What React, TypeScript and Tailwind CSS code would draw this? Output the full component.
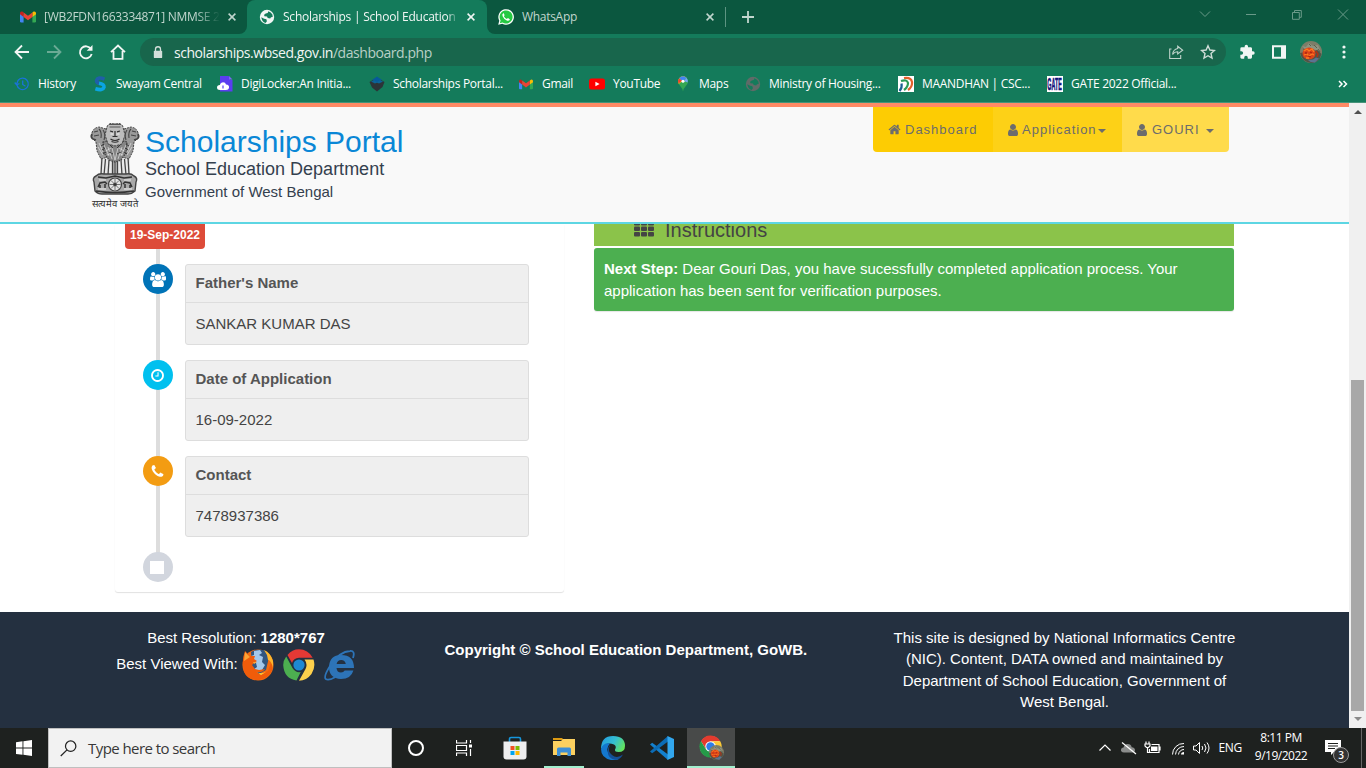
import React from "react";

type P = { className?: string };

const seg = "font-['Open_Sans','Noto_Sans',sans-serif]";

/* ---------- shared glyphs ---------- */
const Gmail = ({ className }: P) => (
  <svg viewBox="0 0 16 12" className={className}>
    <path d="M0 2l3.600 2v7.500H1.200Q0 11.500 0 10.300z" fill="#4285f4" />
    <path d="M12.400 4L16 2v8.300q0 1.200-1.200 1.200h-2.400z" fill="#34a853" />
    <path d="M12.400 1.400l1.200-.9Q16 0 16 2.300v1l-3.600 2.700z" fill="#fbbc04" />
    <path d="M3.600 1.400L2.400.5Q0 0 0 2.300v1L3.600 6z" fill="#c5221f" />
    <path d="M3.600 1.400L8 4.700l4.400-3.300V6L8 9.300 3.600 6z" fill="#ea4335" />
  </svg>
);

const Globe = ({ className }: P) => (
  <svg viewBox="0 0 16 16" className={className}>
    <circle cx="8" cy="8" r="7.200" fill="currentColor" />
    <path
      d="M9.300 2.300Q12 3 13.400 5.600L13.700 8l-1.700.2-.8 1.300-2.500-.5-.7-1.500-2.600-.2-.3-1.500 1.600-1.400 2-.3zM2.300 8.200l2.800 1.500 2.300.6.5 2-1.300 1.700Q2.800 12.900 2.300 8.200z"
      fill="var(--gap)"
    />
  </svg>
);

const Cross = ({ className }: P) => (
  <svg viewBox="0 0 8 8" className={className}>
    <path d="M.6.6l6.800 6.800M7.400.6L.6 7.400" stroke="currentColor" strokeWidth="1.500" />
  </svg>
);

const ChromeLogo = ({ className }: P) => (
  <svg viewBox="0 0 48 48" className={className}>
    <circle cx="24" cy="24" r="22" fill="#fff" />
    <path d="M24 13h20.400A23 23 0 0 0 4 12.600L14.400 29.500A11 11 0 0 1 24 13z" fill="#e33b2e" />
    <path d="M14.400 29.500L4 12.600A23 23 0 0 0 23.500 47L33.600 29.500a11 11 0 0 1-19.200 0z" fill="#259a48" />
    <path d="M24 13h20.400A23 23 0 0 1 23.500 47L33.600 29.500A11 11 0 0 0 24 13z" fill="#fcc934" />
    <circle cx="24" cy="24" r="8.800" fill="#2f7de9" />
  </svg>
);

const Photo = ({ className }: P) => (
  <svg viewBox="0 0 22 22" className={className}>
    <circle cx="11" cy="11" r="11" fill="#7d7d68" />
    <path d="M2 5l4 1 3-4 4 3 5-1 2 5-4 2-5-3-4 2z" fill="#8f9480" />
    <path d="M0 12q2 9 11 10 6 0 9-5l1.500-4-4-4z" fill="#515546" />
    <path d="M3 8l3 1M14 4l3 3M18 8l2 3M9 3l2 2" stroke="#5c5f4d" />
    <ellipse cx="9" cy="12.500" rx="6.500" ry="6" fill="#dc431a" />
    <path d="M4 10l3-2 2 2 3-2 2 3M4 14l3-1 2 2 3-2 2 1M6 17l3 0" stroke="#ff7a1e" strokeWidth="1.300" fill="none" />
    <path d="M5 12l2 0M10 11l2 1M8 15l3 1" stroke="#a92412" strokeWidth="1.300" />
    <path d="M16 10l2 3-1 3" stroke="#b03218" strokeWidth="1.500" fill="none" />
    <path d="M8 19l5-.5 3-2 3 1-4 4q-5 0-7-2.500z" fill="#5c7392" />
  </svg>
);

/* ---------- browser ---------- */
const TabStrip = () => (
  <div className="flex h-[34px] shrink-0 bg-[#147b5b]">
    <div className="flex w-[247px] items-center rounded-br-lg bg-[#0b573f] pl-5 text-[#c1d6ce]">
      <Gmail className="h-3 w-4" />
      <span className="ml-2 w-[176px] overflow-hidden text-[12px] tracking-[-0.29px] whitespace-nowrap [mask-image:linear-gradient(to_right,black_86%,transparent)]">
        [WB2FDN1663334871] NMMSE 2
      </span>
      <Cross className="ml-2 size-2" />
    </div>
    <div className="w-60 bg-[#0b573f]">
      <div className="flex h-full items-center rounded-t-lg bg-[#147b5b] pl-3 text-[#f1f6f4] [--gap:#147b5b]">
        <Globe className="size-4" />
        <span className="ml-[8px] w-[176px] overflow-hidden text-[12px] tracking-[-0.22px] whitespace-nowrap [mask-image:linear-gradient(to_right,black_93%,transparent)]">
          Scholarships | School Education D
        </span>
        <Cross className="ml-2 size-2" />
      </div>
    </div>
    <div className="flex flex-1 items-center rounded-bl-lg bg-[#0b573f] pl-[11px] text-[#c1d6ce]">
      <svg viewBox="0 0 16 16" className="size-4">
        <path d="M.2 15.800L1.300 11.800A7.800 7.800 0 1 1 4.300 14.800z" fill="#fff" />
        <path d="M1.800 14.200l.8-2.800A6.500 6.500 0 1 1 4.600 13.400z" fill="#25c943" />
        <path d="M5.300 4.200q-1.600 1.200-.7 3.100 1.200 3.200 4.600 4.500 2.200.4 2.700-1.600l-2-1.100-1 1q-2-.8-3-2.800l.7-1-.8-2.100z" fill="#fff" />
      </svg>
      <span className="ml-2 w-[184px] text-[12px] tracking-[-0.3px]">WhatsApp</span>
      <Cross className="size-2" />
      <div className="ml-[11px] h-5 w-px bg-[#5d9482]" />
      <svg viewBox="0 0 12 12" className="ml-4 size-3">
        <path d="M6 0v12M0 6h12" stroke="currentColor" strokeWidth="1.800" />
      </svg>
      <div className="flex-1" />
      <svg viewBox="0 0 166 28" className="mr-2 h-7 w-[166px] text-[#6a9a89]" fill="none" stroke="currentColor">
        <path d="M8 8.500l5 5 5-5M54 11.500h10M100.500 9.500h6.800v6.800h-6.800zM102.500 9.500v-2h6.800v6.800h-2M146 6.500l10 10M156 6.500l-10 10" />
      </svg>
    </div>
  </div>
);

const Toolbar = () => (
  <div className="flex h-9 shrink-0 items-center bg-[#147b5b] pl-3.5 text-[#f1f6f4]">
    <svg viewBox="0 0 112 16" className="h-4 w-28" fill="none" stroke="currentColor" strokeWidth="1.800">
      <path d="M15 8H2M8 1.500L1.500 8 8 14.500" />
      <path d="M33 8h13M40 1.500L46.500 8 40 14.500" stroke="#6baa95" />
      <path d="M77 5a6 6 0 1 0 .7 5" />
      <path d="M78.500 1v5.800h-5.800z" fill="currentColor" stroke="none" />
      <path d="M97 8.200L104 1.500l7 6.700M99.500 7v7.800h9V7" />
    </svg>
    <div className="ml-[14px] flex h-7 w-[1086px] items-center rounded-full bg-[#18664c] pl-[13px]">
      <svg viewBox="0 0 10 14" className="h-[13px] w-[10px]">
        <path d="M2.300 6V3.500a2.700 2.700 0 0 1 5.400 0V6" fill="none" stroke="#d3dfda" strokeWidth="1.400" />
        <rect x=".5" y="5" width="9" height="8" rx="1" fill="#d3dfda" />
      </svg>
      <span className="ml-[11px] flex-1 text-[14px] tracking-[-0.45px]">
        scholarships.wbsed.gov.in<span className="text-[#b9d0c7]">/dashboard.php</span>
      </span>
      <svg viewBox="0 0 16 16" className="size-4" fill="none" stroke="#bed3ca" strokeWidth="1.100">
        <path d="M3.500 5H1.700v9.500h11V11" />
        <path d="M9.700 2.200l5 4-5 3.800V7.800Q6.500 7.600 4.600 10.500 5 5.500 9.700 4.500z" />
      </svg>
      <svg viewBox="0 0 16 16" className="mr-[10px] ml-4 size-4" fill="none" stroke="#cfddd7" strokeWidth="1.400">
        <path d="M8 1.800l1.900 4.200 4.500.5-3.400 3 1 4.500L8 11.700 4 14l1-4.500-3.400-3 4.500-.5z" />
      </svg>
    </div>
    <svg viewBox="0 0 24 24" className="ml-[13px] size-4" fill="currentColor">
      <path d="M21 11h-1.500V7c0-1.100-.9-2-2-2h-4V3.500a2.500 2.500 0 0 0-5 0V5H4a2 2 0 0 0-2 2v3.800h1.500a2.700 2.700 0 0 1 0 5.400H2V20c0 1.100.9 2 2 2h3.800v-1.500a2.700 2.700 0 0 1 5.400 0V22h4.300a2 2 0 0 0 2-2v-4H21a2.500 2.500 0 0 0 0-5z" />
    </svg>
    <svg viewBox="0 0 14 14" className="ml-[17px] size-3.5">
      <path d="M0 .2h14v13.600H0zM2 2.200v9.600h7V2.200z" fill="currentColor" fillRule="evenodd" />
    </svg>
    <Photo className="ml-[14px] size-[22px]" />
    <svg viewBox="0 0 4 14" className="ml-5 h-3.5 w-1" fill="currentColor">
      <circle cx="2" cy="2" r="1.600" />
      <circle cx="2" cy="7" r="1.600" />
      <circle cx="2" cy="12" r="1.600" />
    </svg>
  </div>
);

const Mark = ({ w, label, children }: { w: string; label: string; children: React.ReactNode }) => (
  <div className={"flex shrink-0 items-center " + w}>
    <div className="flex size-4 shrink-0 items-center justify-center">{children}</div>
    <span className="ml-2 whitespace-nowrap">{label}</span>
  </div>
);

const Bookmarks = () => (
  <div className="flex h-8 shrink-0 items-center bg-[#147b5b] pb-1 pl-3.5 text-[12px] tracking-[-0.3px] text-white">
    <Mark w="w-[78px]" label="History">
      <svg viewBox="0 0 16 16" className="size-4" fill="none" stroke="#1a73d8" strokeWidth="1.300">
        <path d="M3 9a5.700 5.700 0 1 0 1-4.500L2.500 8.500M.7 6.500l2 2.500 2.700-1.500M8.700 4.500v4l2.800 1.700" />
      </svg>
    </Mark>
    <Mark w="w-[125px]" label="Swayam Central">
      <svg viewBox="0 0 16 16" className="size-4" fill="none" strokeWidth="3.600">
        <path d="M12.500 3.200Q6 .5 4.600 4.200q-.4 2.500 3.400 3.500" stroke="#205fa8" />
        <path d="M7 7.300q5.500.8 5 4Q11 15 3.400 12.700" stroke="#0aa5e2" />
      </svg>
    </Mark>
    <Mark w="w-[152px]" label="DigiLocker:An Initia...">
      <svg viewBox="0 0 16 16" className="size-4">
        <path d="M3 0h8.500l1.500 1.500V4h2.500v11.500H3z" fill="#5b3df0" />
        <path d="M12 0l3.500 3.500H12z" fill="#7d64f5" />
        <path d="M3 14Q0 14 0 11.500T2.800 9Q3.500 6.300 6 6.300T9 8.500q3.500.2 3 3.500-.4 2-3 2z" fill="#fff" />
        <path d="M6 9.500v3" stroke="#5b3df0" strokeWidth="1.200" />
      </svg>
    </Mark>
    <Mark w="w-[149px]" label="Scholarships Portal...">
      <svg viewBox="0 0 16 16" className="size-4">
        <path d="M8 .5L13 4 8 7 3 4z" fill="#07599a" />
        <path d="M.5 6L4 4l4 3 4-3 3.500 2-2 5L8 15.500l-5-4z" fill="#2c3438" />
        <path d="M2 5.500L5 4l3 2 3-2 3 1.500-4 2-2-1-2 1z" fill="#0b6498" />
      </svg>
    </Mark>
    <Mark w="w-[71px]" label="Gmail">
      <Gmail className="h-[11px] w-[14px]" />
    </Mark>
    <Mark w="w-[86px]" label="YouTube">
      <svg viewBox="0 0 16 12" className="h-3 w-4">
        <rect y=".5" width="16" height="11" rx="2.500" fill="#f00" />
        <path d="M6.400 3.700L10.600 6 6.400 8.300z" fill="#fff" />
      </svg>
    </Mark>
    <Mark w="w-[70px]" label="Maps">
      <svg viewBox="0 0 12 16" className="h-4 w-3">
        <path d="M6 15.500Q5.600 12.500 3 9.700 1 7.500 1 5.200a5 5 0 0 1 10 0q0 2.300-2 4.500Q6.400 12.500 6 15.500z" fill="#34a853" />
        <path d="M1.800 8L9.500 1.700Q6 -1 2.700 1.700.2 4.300 1.800 8z" fill="#fbbc04" />
        <path d="M2.200 2.200L5 4.500 1.700 7.500Q.2 4.500 2.200 2.200z" fill="#ea4335" />
        <path d="M2.200 2.200Q5-1.200 9.500 1.700L6 5.500z" fill="#4285f4" />
        <path d="M9.500 1.700Q11.500 4 10.700 6.500L7 5z" fill="#72a6f7" />
        <circle cx="6" cy="5.200" r="1.500" fill="#fff" />
      </svg>
    </Mark>
    <Mark w="w-[153px]" label="Ministry of Housing...">
      <Globe className="size-4 text-[#5f6b68] [--gap:#147b5b]" />
    </Mark>
    <Mark w="w-[149px]" label="MAANDHAN | CSC...">
      <svg viewBox="0 0 16 16" className="size-4" fill="none" strokeWidth="2.200">
        <path d="M0 0h16v16H0z" fill="#fff" />
        <path d="M6 2q7-1 8 4 .5 5-4 8" stroke="#e2602b" />
        <path d="M3 5q6-2 7 2 0 4-4 7" stroke="#2c9a57" />
        <path d="M3.500 7.500q1 4-2 7.500" stroke="#1b5f93" />
      </svg>
    </Mark>
    <Mark w="w-[160px]" label="GATE 2022 Official...">
      <svg viewBox="0 0 16 16" className="size-4">
        <path d="M0 0h16v16H0z" fill="#fff" />
        <text transform="translate(.3 13.700) scale(.335 1)" fontSize="16" fontWeight="bold" fontFamily="Liberation Sans" fill="#10107a" stroke="#10107a" strokeWidth=".6" letterSpacing="0">
          GATE
        </text>
      </svg>
    </Mark>
    <svg viewBox="0 0 10 8" className="ml-[131px] h-2 w-2.5" fill="none" stroke="currentColor" strokeWidth="1.500">
      <path d="M1 1l3 3-3 3M5.500 1l3 3-3 3" />
    </svg>
  </div>
);

/* ---------- web page ---------- */
const Fa = ({ d, vb, className }: { d: string; vb: string; className?: string }) => (
  <svg viewBox={vb} className={className} fill="currentColor">
    <path d={d} />
  </svg>
);
const HOME =
  "M1472 992v480q0 26-19 45t-45 19h-384v-384h-256v384h-384q-26 0-45-19t-19-45v-480q0-1 .5-3t.5-3l575-474 575 474q1 2 1 6zm223-69l-62 74q-8 9-21 11h-3q-13 0-21-7l-692-577-692 577q-12 8-24 7-13-2-21-11l-62-74q-8-10-7-23.500t11-21.500l719-599q32-26 76-26t76 26l244 204v-195q0-14 9-23t23-9h192q14 0 23 9t9 23v408l219 182q10 8 11 21.500t-7 23.500z";
const USER =
  "M1280 1399q0 109-62.500 187t-150.500 78h-854q-88 0-150.500-78t-62.500-187q0-85 8.500-160.500t31.500-152 58.500-131 94-89 134.500-34.500q131 128 313 128t313-128q76 0 134.500 34.500t94 89 58.500 131 31.500 152 8.500 160.500zm-256-887q0 159-112.500 271.500t-271.500 112.500-271.500-112.500-112.500-271.500 112.500-271.500 271.500-112.500 271.500 112.500 112.500 271.500z";
const USERS =
  "M593 896q-162 5-265 128h-134q-82 0-138-40.500t-56-118.500q0-353 124-353 6 0 43.500 21t97.500 42.500 119 21.500q67 0 133-23-5 37-5 66 0 159 81 256zm1071 637q0 120-73 189.500t-194 69.500h-874q-121 0-194-69.500t-73-189.500q0-53 3.500-103.500t14-109 26.500-108.500 43-97.500 62-81 85.500-53.500 111.500-20q10 0 43 21.500t73 48 107 48 135 21.500 135-21.500 107-48 73-48 43-21.500q61 0 111.500 20t85.500 53.500 62 81 43 97.500 26.500 108.500 14 109 3.500 103.500zm-1024-1277q0 106-75 181t-181 75-181-75-75-181 75-181 181-75 181 75 75 181zm704 384q0 159-112.500 271.500t-271.500 112.500-271.500-112.500-112.500-271.500 112.500-271.500 271.500-112.500 271.500 112.500 112.500 271.500zm576 225q0 78-56 118.500t-138 40.500h-134q-103-123-265-128 93-134 93-293 0-29-5-66 66 23 133 23 59 0 119-21.500t97.500-42.500 43.500-21q124 0 124 353zm-128-609q0 106-75 181t-181 75-181-75-75-181 75-181 181-75 181 75 75 181z";
const CLOCK =
  "M1024 544v448q0 14-9 23t-23 9h-320q-14 0-23-9t-9-23v-64q0-14 9-23t23-9h224v-352q0-14 9-23t23-9h64q14 0 23 9t9 23zm416 352q0-148-73-273t-198-198-273-73-273 73-198 198-73 273 73 273 198 198 273 73 273-73 198-198 73-273zm224 0q0 209-103 385.500t-279.500 279.500-385.500 103-385.500-103-279.500-279.500-103-385.500 103-385.500 279.500-279.500 385.500-103 385.500 103 279.500 279.500 103 385.500z";
const PHONE =
  "M1600 1240q0 27-10 70.500t-21 68.500q-21 50-122 106-94 51-186 51-27 0-53-3.500t-57.500-12.500-47-14.500-55.500-20.500-49-18q-98-35-175-83-127-79-264-216t-216-264q-48-77-83-175-3-9-18-49t-20.500-55.500-14.500-47-12.500-57.500-3.500-53q0-92 51-186 56-101 106-122 25-11 68.500-21t70.500-10q14 0 21 3 18 6 53 76 11 19 30 54t35 63.500 31 53.500q3 4 17.500 25t21.500 35.500 7 28.500q0 20-28.500 50t-62 55-62 53-28.500 46q0 9 5 22.500t8.500 20.500 14 24 11.500 19q76 137 174 235t235 174q2 1 19 11.500t24 14 20.500 8.500 22.500 5q18 0 46-28.500t53-62 55-62 50-28.500q14 0 28.500 7t35.500 21.500 25 17.500q25 15 53.500 31t63.500 35 54 30q70 35 76 53 3 7 3 21z";

const Emblem = () => (
  <svg viewBox="0 0 50 74" className="h-[74px] w-[50px]" fill="none" stroke="#444">
    {/* legs */}
    <path d="M10 32h30v21H10z" fill="#e9e9e9" stroke="none" />
    <path d="M12 34l-1 17M15.500 36l-1.500 16M19 37l-1 15M22.500 38v14M27.500 38v14M31 37l1 15M34.500 36l1.500 16M38 34l1 17" strokeWidth="1.300" />
    <path d="M23.500 38h3v14h-3z" fill="#777" stroke="none" />
    {/* side lions */}
    <path d="M2 10Q3 5 9 4l7 2 3 8-1 20-7 2-4-8-1-9-4-4z" fill="#9a9a9a" strokeDasharray="2 1" />
    <path d="M48 10q-1-5-7-6l-7 2-3 8 1 20 7 2 4-8 1-9 4-4z" fill="#9a9a9a" strokeDasharray="2 1" />
    <path d="M2 11q-2 3 1 5l3 1M48 11q2 3-1 5l-3 1" strokeWidth="1.600" />
    <path d="M4 9l4-1M46 9l-4-1M4 13l5-1M46 13l-5-1M9 6q3 3 2 9M41 6q-3 3-2 9M13 7q3 4 1 10M37 7q-3 4-1 10" strokeWidth="1.100" />
    {/* centre lion */}
    <path d="M13 19q5-2 12 0 7-2 12 0l-1 11-5 7-6 2-6-2-5-7z" fill="#858585" strokeDasharray="1.500 1" strokeWidth="1.300" />
    <path d="M17 4q1-4 8-4t8 4l2 8-3 9-7 2-7-2-3-9z" fill="#bcbcbc" strokeDasharray="2.500 .8" />
    <path d="M19 1.500h12M19.500 4h11" stroke="#555" strokeWidth="1.200" />
    <path d="M20 8l3 .8M27 8.800l3-.8M25 8v5M22.500 13.500h5M20.500 16q4.500 3 9 0M21.500 18.500q3.500 1.500 7 0" stroke="#2e2e2e" strokeWidth="1.200" />
    <path d="M20.500 11h3M26.500 11h3" stroke="#f1f1f1" strokeWidth="1.200" />
    <path d="M9 20l4 9M8 24l5 8M14 22l5 11M18 24l4 12M22 25l3 12 3-12M32 24l-4 12M36 22l-5 11M41 20l-4 9M42 24l-5 8M16 28l5-3M29 25l5 3M17 32l5-2M28 30l5 2" stroke="#e2e2e2" strokeWidth=".7" />
    <path d="M11 23l3-2M12 27l3-2M13 31l3-2M39 23l-3-2M38 27l-3-2M37 31l-3-2M20 22l3 3M30 22l-3 3M19 29l4 2M31 29l-4 2" stroke="#2f2f2f" strokeWidth=".9" />
    {/* abacus */}
    <path d="M6 53q3-3 8-2h22q5-1 8 2 4 2 2 6l-1 9q-3 3-7 3H12q-4 0-7-3l-1-9q-2-4 2-6z" fill="#a9a9a9" strokeWidth="1.400" />
    <path d="M8 54l8 1 9-2 9 2 8-1M6 68q19 3 38 0" stroke="#333" strokeWidth="1.300" />
    <path d="M9 57l7 0M34 57h7M8 66h8M34 66h8" stroke="#eee" />
    <path d="M8 64l2-4 5-1 2 2M10 65v-3M15 65v-4M33 61l2-2 5 1 2 4M35 65v-4M40 65v-3" stroke="#333" strokeWidth="1.500" />
    <circle cx="25" cy="61.500" r="6.500" fill="#e3e3e3" strokeWidth="1.200" />
    <path d="M25 56v11M19.500 61.500h11M21 57.500l8 8M29 57.500l-8 8" strokeWidth=".7" />
    <circle cx="25" cy="61.500" r="1.400" fill="#333" />
  </svg>
);

const Caret = ({ className }: P) => (
  <svg viewBox="0 0 8 4" className={"h-1 w-2 " + (className ?? "")}>
    <path d="M0 0h8L4 4z" fill="currentColor" />
  </svg>
);

const Header = () => (
  <header className="flex h-[121px] shrink-0 border-t-4 border-b-2 border-t-[#ff8a65] border-b-[#5dd6e3] bg-[#f9f9f9]">
    <div className="ml-[90px] flex w-[55px] shrink-0 flex-col items-start pt-4">
      <Emblem />
      <span className="mt-px ml-0.5 text-[9.500px] leading-[12px] font-normal tracking-[0.1px] whitespace-nowrap text-[#333]">सत्यमेव जयते</span>
    </div>
    <div className="w-[728px] pt-[17px] whitespace-nowrap text-[#34404e]">
      <div className="text-[30px] leading-[35px] text-[#0a87d6]">Scholarships Portal</div>
      <div className="text-[18px] leading-5">School Education Department</div>
      <div className="mt-[3px] text-[15px] leading-5">Government of West Bengal</div>
    </div>
    <nav className="flex h-[45px] overflow-hidden rounded-b text-[13px] tracking-[1px] text-[#6c6c6c]">
      <div className="flex w-[120px] items-center bg-[#fdcc03] pl-[15px]">
        <Fa d={HOME} vb="0 0 1792 1792" className="h-[13px] w-[13px]" />
        <span className="ml-1">Dashboard</span>
      </div>
      <div className="flex w-[129px] items-center bg-[#fdd117] pl-[15px]">
        <Fa d={USER} vb="0 0 1280 1792" className="h-[14px] w-[10px]" />
        <span className="ml-1">Application</span>
        <Caret className="mt-[3px] ml-px" />
      </div>
      <div className="flex w-[107px] items-center bg-[#ffdb4b] pl-[15px]">
        <Fa d={USER} vb="0 0 1280 1792" className="h-[14px] w-[10px]" />
        <span className="ml-[5px] w-[54px]">GOURI</span>
        <Caret className="mt-[3px]" />
      </div>
    </nav>
  </header>
);

const Item = ({ color, icon, title, value }: { color: string; icon: React.ReactNode; title: string; value: string }) => (
  <div className="mb-[15px] flex items-start">
    <div className={"flex size-[30px] items-center justify-center rounded-full pr-px text-white " + color}>{icon}</div>
    <div className="ml-3 h-[81px] w-[344px] rounded-[3px] border border-[#ddd] bg-[#efefef] text-[15px] text-[#444]">
      <div className="h-[38px] border-b border-[#ddd] px-[9.500px] pt-[10px] leading-4 font-bold text-[#555]">{title}</div>
      <div className="px-[9.500px] pt-[10px] leading-[22px]">{value}</div>
    </div>
  </div>
);

const Timeline = () => (
  <section className="relative ml-[115px] h-[368px] w-[449px] rounded-b-[3px] bg-white pl-7 shadow-[0_1px_1px_rgba(0,0,0,0.12)]">
    <div className="absolute top-0 left-[41px] h-[330px] w-1 bg-[#ddd]" />
    <div className="relative">
      <div className="-ml-[18px] h-[25px] w-20 rounded-b bg-[#dd4b39] pt-[3px] text-center text-[12px] leading-[17px] font-bold text-white">
        19-Sep-2022
      </div>
      <div className="pt-[15px]">
        <Item color="bg-[#0073b7]" title="Father's Name" value="SANKAR KUMAR DAS" icon={<Fa d={USERS} vb="0 0 1920 1792" className="h-[15px] w-4" />} />
        <Item color="bg-[#00c0ef]" title="Date of Application" value="16-09-2022" icon={<Fa d={CLOCK} vb="0 0 1792 1792" className="size-[15px]" />} />
        <Item color="bg-[#f39c12]" title="Contact" value="7478937386" icon={<Fa d={PHONE} vb="0 0 1792 1792" className="size-[15px]" />} />
        <div className="flex size-[30px] items-center justify-center rounded-full bg-[#d2d6de] pr-[2px]">
          <div className="h-[13px] w-[14px] bg-white" />
        </div>
      </div>
    </div>
  </section>
);

const Instructions = () => (
  <section className="ml-[30px] w-[640px]">
    <div className="flex h-[22px] items-end overflow-hidden bg-[#8bc34a] pl-10 text-[#444]">
      <svg viewBox="0 0 20 16" className="mb-[9px] h-4 w-5 shrink-0" fill="currentColor">
        {[0, 7, 14].map((x) => [0, 5.500, 11].map((y) => <rect key={x + "-" + y} x={x} y={y} width="6" height="4.500" rx="1" />))}
      </svg>
      <span className="ml-[11px] text-[20px] leading-[31px]">Instructions</span>
    </div>
    <div className="mt-0.5 h-[63px] rounded-[3px] bg-[#4caf50] px-2.5 pt-[10px] text-[15px] leading-[22px] text-white shadow-[0_1px_1px_rgba(0,0,0,0.1)]">
      <b>Next Step:</b> Dear Gouri Das, you have sucessfully completed application process. Your application has been sent for verification purposes.
    </div>
  </section>
);

const Firefox = () => (
  <svg viewBox="0 0 32 32" className="size-8">
    <circle cx="16" cy="16" r="15.500" fill="#f36c12" />
    <path d="M9 3Q16-1 24 2l3 6-3 13-7 4-7-5z" fill="#31567f" />
    <path d="M12 2l6-1 2 3-3 2 4 2-1 5 3 3-3 5-6 3-3-3 4-3-1-4-5-1V7l3-1z" fill="#a3c8ea" />
    <path d="M3 2l5 5 5 0-1 3 3 2-3 2-2 2 3 4 4 1 6-1q-3 4-8 3l3 3 8-4 3-8-1-8 3 7q1 16-15 18Q2 31 1 17 0 10 3 2z" fill="#f05c0a" />
    <path d="M22 1q7 3 9 11l0 7q-2-8-5-8l-1-5z" fill="#fdb62c" />
    <path d="M3 3l-1 9 6-4zM11 13l4 0-3 2z" fill="#fba436" />
    <path d="M14 22l5 4 5-3-3 1q-4 1-7-2z" fill="#fdd23b" />
  </svg>
);

const FlatChrome = () => (
  <svg viewBox="0 0 32 32" className="size-8">
    <path d="M4.500 6Q9 .3 16 .3 25 .3 29.700 8.800H16Q10.500 9 9 14z" fill="#e53935" />
    <path d="M3.200 7.500L9.500 19q3 5 8.200 4l-4.200 8.500Q1 29.500.2 16 .2 11.500 3.200 7.500z" fill="#4caf50" />
    <path d="M30.500 10.500Q33 18 28.500 25q-5 6.700-12.500 6.800L22.500 20q2.500-5-1-9.500z" fill="#fdd04c" />
    <circle cx="16" cy="16" r="5.600" fill="#1e88d4" />
  </svg>
);

const Explorer = () => (
  <svg viewBox="0 0 32 32" className="size-8">
    <path d="M30 19H12.500q.5 4.500 4.500 4.500 2.500 0 3.700-2h8.700Q27 30 17 30 5 29.500 5 18 5.500 6.200 17 6q13 0 13 13zM12.600 15h9.200q-.8-4-4.600-4t-4.600 4z" fill="#2d74b8" />
    <path d="M29 9Q31.500 1.500 26 2 16 2.500 7 15.500-1 27.500 1.800 30q2.700 2 9.700-2" fill="none" stroke="#2d74b8" strokeWidth="1.800" />
  </svg>
);

const Footer = () => (
  <footer className="flex h-[116px] shrink-0 items-start bg-[#243040] pt-[15px] text-center text-[15px] leading-[21.430px] text-white">
    <div className="ml-[65px] w-[342px]">
      <div>
        Best Resolution: <b>1280*767</b>
      </div>
      <div className="flex items-center justify-center pt-px">
        <span className="mr-1 -mt-[3px]">Best Viewed With:</span>
        <Firefox />
        <span className="mx-[9px]">
          <FlatChrome />
        </span>
        <Explorer />
      </div>
    </div>
    <div className="ml-[37.500px] w-[362px] pt-3 font-bold whitespace-nowrap">Copyright © School Education Department, GoWB.</div>
    <div className="ml-[86px] w-[344px]">
      This site is designed by National Informatics Centre (NIC). Content, DATA owned and maintained by Department of School Education, Government of West Bengal.
    </div>
  </footer>
);

const Scrollbar = () => (
  <div className="flex w-[17px] shrink-0 flex-col items-center bg-[#f0f0f0]">
    <svg viewBox="0 0 8 4" className="mt-[7px] h-1 w-2">
      <path d="M0 4l4-4 4 4z" fill="#505050" />
    </svg>
    <div className="mt-[266px] h-[331px] w-[13px] bg-[#a8a8a8]" />
    <svg viewBox="0 0 8 4" className="mt-1.5 h-1 w-2">
      <path d="M0 0h8L4 4z" fill="#8a8a8a" />
    </svg>
  </div>
);

/* ---------- taskbar ---------- */
const Slot = ({ className = "", children }: { className?: string; children: React.ReactNode }) => (
  <div className={"flex h-10 shrink-0 items-center justify-center " + className}>{children}</div>
);

const Taskbar = () => (
  <div className={"flex h-10 shrink-0 bg-[#1e211f] text-white " + seg}>
    <Slot className="w-12">
      <svg viewBox="0 0 16 16" className="size-4" fill="#fff">
        <path d="M0 2.200l6.500-.9v6.300H0zM7.400 1.200L16 0v7.600H7.400zM0 8.500h6.500v6.300L0 13.900zM7.400 8.500H16V16l-8.600-1.200z" />
      </svg>
    </Slot>
    <div className="flex w-[344px] shrink-0 items-center border border-[#bfbfbf] bg-[#f2f2f2] text-[#383838]">
      <svg viewBox="0 0 18 18" className="ml-[11px] size-[17px]" fill="none" stroke="#222" strokeWidth="1.300">
        <circle cx="11.300" cy="6.500" r="5.500" />
        <path d="M7.400 10.400L.8 17" />
      </svg>
      <span className="ml-[11px] text-[15px] tracking-[-0.57px]">Type here to search</span>
    </div>
    <Slot className="w-12">
      <div className="size-4 rounded-full border-2 border-white" />
    </Slot>
    <Slot className="w-12">
      <svg viewBox="0 0 16 16" className="size-4" fill="none" stroke="#fff" strokeWidth="1.200">
        <path d="M.5 0v3h10V0M.5 5.500h10v5H.5zM.5 16v-3h10v3M14.500 0v3M14.500 9v7" />
        <path d="M13 4.500h3v3h-3z" fill="#fff" stroke="none" />
      </svg>
    </Slot>
    <Slot className="ml-[3px] w-12">
      <svg viewBox="0 0 24 24" className="size-6">
        <path d="M6.500 6V3q0-1.500 1.500-1.500h8q1.500 0 1.500 1.500v3" fill="none" stroke="#1696dc" strokeWidth="1.600" />
        <path d="M.5 5.500h23v15q0 3-3 3h-17q-3 0-3-3z" fill="#eeeeef" />
        <path d="M7.500 10h4v4h-4z" fill="#f25022" />
        <path d="M12.500 10h4v4h-4z" fill="#7fba00" />
        <path d="M7.500 15h4v4h-4z" fill="#00a4ef" />
        <path d="M12.500 15h4v4h-4z" fill="#ffb900" />
      </svg>
    </Slot>
    <Slot className="ml-[5px] w-10 border-b-2 border-[#a2efce]">
      <svg viewBox="0 0 22 18" className="h-[18px] w-[22px]">
        <path d="M0 0h9l2 2H0z" fill="#dc9a12" />
        <path d="M0 3l8 0 2-2h12v16H0z" fill="#fbd05f" />
        <path d="M4 18v-7q0-1.500 1.500-1.500h11q1.500 0 1.500 1.500v7h-3.500v-3.500h-7V18z" fill="#3c8fd6" />
      </svg>
    </Slot>
    <Slot className="ml-[5px] w-12">
      <svg viewBox="0 0 24 24" className="size-6">
        <defs>
          <linearGradient id="edgeTop" x1="0" y1="0.300" x2="1" y2="0.700">
            <stop offset="0" stopColor="#249fe0" />
            <stop offset=".5" stopColor="#35bfd0" />
            <stop offset="1" stopColor="#67e554" />
          </linearGradient>
        </defs>
        <path d="M0 13Q0 0 12 0t12 10q0 6-6.500 6-4 0-3.500-2.500 2-3-1-5Q5 5 0 13z" fill="url(#edgeTop)" />
        <path d="M0 13Q2 6.500 9 7.500 4.500 12 7.500 17.500T18 23Q14 24.600 10 23.900 0 22 0 13z" fill="#1478cf" />
        <path d="M9 9q-3 6 2 10t11-.5Q19 24 14 23.800 7 22.500 6.800 16 6.700 11 9 9z" fill="#144f96" />
      </svg>
    </Slot>
    <Slot className="ml-px w-12">
      <svg viewBox="0 0 24 24" className="size-6">
        <path d="M0 8.500L2.200 6.700 18 18.500V24z" fill="#1380cd" />
        <path d="M0 15.500l2.200 1.800L18 5.500V0z" fill="#0b6cb5" />
        <path d="M17.500 0L24 3v18l-6.500 3z" fill="#32a7ed" />
      </svg>
    </Slot>
    <Slot className="ml-px w-12 border-b-2 border-[#a2efce] bg-[#484a49]">
      <div className="relative size-6">
        <ChromeLogo className="size-[23px]" />
        <Photo className="absolute top-[10px] left-[10px] size-[15px]" />
      </div>
    </Slot>
    <div className="flex-1" />
    <svg viewBox="0 0 112 20" className="mt-[10px] mr-[7px] h-5 w-28 shrink-0" fill="none" stroke="#fff" strokeWidth="1.200">
      <path d="M.5 12.500L6 7l5.500 5.500" />
      <path d="M25 14.500q-3.500-.5-3-3 .3-2 2.500-2 1-3.500 4-3.500 3.500 0 4.200 3.200 3.300.3 3.300 3 0 2-2 2.300z" fill="#8b8d8c" stroke="none" />
      <path d="M23 4.500L37 16" />
      <path d="M52.500 6.500h7.500v8H50.500V11M61 8.500v4" />
      <path d="M52 8.500h6.500v4.500H52z" fill="#fff" stroke="none" />
      <path d="M47 3.500v2.500M50 3.500v2.500M46 6h5v2l-1.500 1.500h-2L46 8zM48.500 10v4.500h3" />
      <path d="M73.500 16.500A11 11 0 0 1 85 5.500M76.500 16.500A8.500 8.500 0 0 1 85 8.500M79.500 16.500A5.500 5.500 0 0 1 85 11.500" strokeWidth="1" />
      <path d="M82 16.500q0-2.500 3-2.500v2.500z" fill="#fff" stroke="none" />
      <path d="M94.500 8h2.500l3.500-3.500v11L97 12h-2.500zM103 8q1.500 2 0 4M105.500 6q3 4 0 8M108 4.500q4 5.500 0 11" strokeWidth="1" />
    </svg>
    <span className="self-center text-[12px] tracking-[-0.3px]">ENG</span>
    <div className="ml-[11px] w-[56px] self-center pb-[2px] text-center text-[12px] leading-[18px] tracking-[-0.5px] whitespace-nowrap">
      <div>8:11 PM</div>
      <div>9/19/2022</div>
    </div>
    <div className="relative ml-[16px] w-[36px] shrink-0">
      <svg viewBox="0 0 16 16" className="mt-3 size-4">
        <path d="M0 0h16v12H9l-3 3v-3H0z" fill="#fff" />
        <path d="M3 3.500h10M3 6h10M3 8.500h7" stroke="#1e211f" />
      </svg>
      <div className="absolute top-[19px] left-[8px] flex size-4 items-center justify-center rounded-full border border-[#9a9a9a] bg-[#333] text-[10px] font-semibold">3</div>
    </div>
    <div className="mr-1 w-px bg-[#666]" />
  </div>
);

export default function App() {
  return (
    <div className="flex h-[768px] w-[1366px] flex-col overflow-hidden bg-white">
      <div className={"flex shrink-0 flex-col " + seg}>
        <TabStrip />
        <Toolbar />
        <Bookmarks />
        <div className="h-px bg-[#46937a]" />
      </div>
      <div className="flex min-h-0 flex-1 font-['Liberation_Sans',Arial,sans-serif]">
        <main className="flex w-[1349px] flex-col">
          <Header />
          <div className="flex h-[388px] shrink-0 items-start">
            <Timeline />
            <Instructions />
          </div>
          <Footer />
        </main>
        <Scrollbar />
      </div>
      <Taskbar />
    </div>
  );
}
